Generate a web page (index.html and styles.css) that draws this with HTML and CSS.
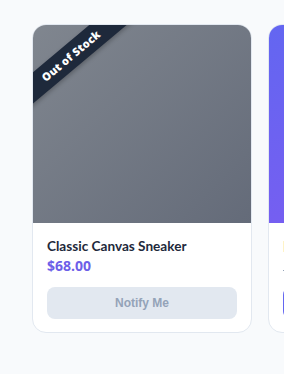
FILE: index.html
```html
<!DOCTYPE html>
<html>
<head>
	<title>Tienda</title>
	<link rel="stylesheet" href="styles.css">
</head>
<body>

	<div class="fila">

		<div class="card">
			<div class="foto gris">
				<span class="cinta">Out of Stock</span>
			</div>
			<div class="info">
				<h3 class="nombre">Classic Canvas Sneaker</h3>
				<p class="precio">$68.00</p>
				<button class="boton agotado">Notify Me</button>
			</div>
		</div>

		<div class="card">
			<div class="foto morado"></div>
			<div class="info">
				<div class="nombre"><span class="etiqueta"></span></div>
				<div class="precio"><span class="antes"></span></div>
				<div class="boton"></div>
			</div>
		</div>

	</div>

</body>
</html>
```

FILE: styles.css
```css
body{
	margin: 0;
	background: #f8fafc;
	font-family: "Open Sans", sans-serif;
	overflow: hidden;
}

.fila{
	display: flex;
	gap: 16px;
	padding: 24px 32px;
}

.card{
	flex-shrink: 0;
	box-sizing: border-box;
	width: 220px;
	background: white;
	border: 1px solid #e2e8f0;
	border-radius: 14px;
	overflow: hidden;
}

.foto{
	position: relative;
	height: 198px;
	overflow: hidden;
}

.gris{
	background: linear-gradient(135deg, #80868f, #646b79);
}

.morado{
	background: linear-gradient(160deg, #6366f1, #7c5cf1);
}

.cinta{
	position: absolute;
	left: -42px;
	top: 19px;
	width: 160px;
	height: 24px;
	line-height: 24px;
	text-align: center;
	background: #1e293b;
	color: white;
	font-size: 11px;
	font-weight: 800;
	letter-spacing: .2px;
	transform: rotate(-40deg);
	box-shadow: 0 2px 4px rgba(0,0,0,.25);
}

.info{
	padding: 14px 14px 13px;
}

.nombre{
	margin: 0;
	height: 19px;
	font-family: Lato, sans-serif;
	font-size: 13.6px;
	line-height: 19px;
	font-weight: 700;
	color: #1e293b;
	white-space: nowrap;
}

.precio{
	margin: 0;
	height: 19px;
	font-size: 14px;
	line-height: 19px;
	font-weight: 700;
	color: #6d5ee8;
}

.etiqueta{
	display: inline-block;
	width: 40px;
	height: 11px;
	margin-top: 4px;
	background: #fef3c7;
}

.antes{
	display: inline-block;
	width: 40px;
	height: 1px;
	margin-top: 9px;
	background: #94a3b8;
}

.boton{
	display: block;
	box-sizing: border-box;
	width: 100%;
	height: 32px;
	margin-top: 12px;
	border: none;
	border-radius: 8px;
	background: #6366f1;
	color: white;
	font-family: "Liberation Sans", Arial, sans-serif;
	font-size: 12px;
	font-weight: 700;
}

.agotado{
	background: #e2e8f0;
	color: #94a3b8;
}
```
